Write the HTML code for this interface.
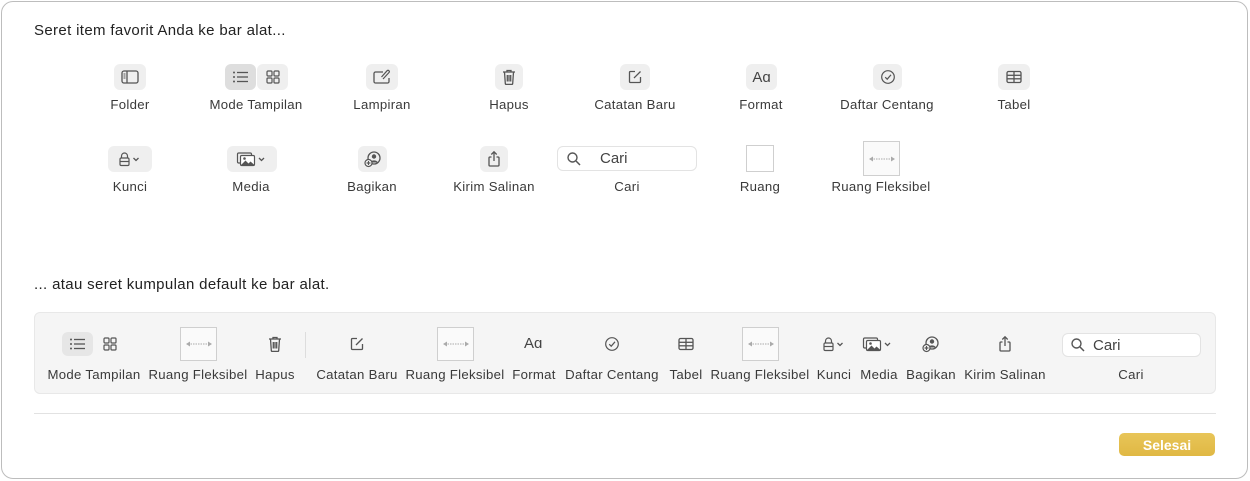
<!DOCTYPE html>
<html><head><meta charset="utf-8"><style>
*{margin:0;padding:0;box-sizing:border-box}
body{width:1250px;height:481px;background:#fff;font-family:"Liberation Sans",sans-serif;color:#333;position:relative;overflow:hidden}
.win{position:absolute;left:1px;top:1px;width:1247px;height:478px;border:1px solid #bdbdbd;border-radius:12px;background:#fff}
.t{position:absolute;font-size:15px;color:#222;letter-spacing:0.35px}
.l{position:absolute;font-size:13.2px;color:#3a3a3a;white-space:nowrap;transform:translateX(-50%);letter-spacing:0.3px}
.b{position:absolute;height:26px;background:#efefef;border-radius:6px;display:flex;align-items:center;justify-content:center}
.i{position:absolute;display:flex;align-items:center;justify-content:center}
svg{display:block}
.box{position:absolute;border:1px solid #cfcfcf;background:#fff}
.flex{position:absolute;border:1px solid #cfcfcf;background:#fafafa;display:flex;align-items:center;justify-content:center}
.srch{position:absolute;border:1px solid #e3e3e3;border-radius:6px;background:#fff;font-size:15px;color:#444;display:flex;align-items:center}
.bar{position:absolute;left:34px;top:312px;width:1182px;height:82px;background:#f5f5f5;border:1px solid #e8e8e8;border-radius:6px}
</style></head><body>
<svg width="0" height="0" style="position:absolute">
<defs>
<symbol id="folder" viewBox="0 0 20 16"><rect x="2" y="2" width="16" height="12" rx="2" fill="none" stroke="#555" stroke-width="1.3"/><line x1="7" y1="2" x2="7" y2="14" stroke="#555" stroke-width="1.3"/><line x1="3.5" y1="5" x2="5.5" y2="5" stroke="#555"/><line x1="3.5" y1="7" x2="5.5" y2="7" stroke="#555"/><line x1="3.5" y1="9" x2="5.5" y2="9" stroke="#555"/></symbol>
<symbol id="list" viewBox="0 0 20 16"><g fill="#555"><circle cx="3" cy="3.5" r="1"/><circle cx="3" cy="8" r="1"/><circle cx="3" cy="12.5" r="1"/></g><g stroke="#555" stroke-width="1.3"><line x1="6" y1="3.5" x2="17" y2="3.5"/><line x1="6" y1="8" x2="17" y2="8"/><line x1="6" y1="12.5" x2="17" y2="12.5"/></g></symbol>
<symbol id="grid" viewBox="0 0 16 16" ><g fill="none" stroke="#555" stroke-width="1.2"><rect x="2" y="2" width="5" height="5" rx="1"/><rect x="9" y="2" width="5" height="5" rx="1"/><rect x="2" y="9" width="5" height="5" rx="1"/><rect x="9" y="9" width="5" height="5" rx="1"/></g></symbol>
<symbol id="attach" viewBox="0 0 20 16"><path d="M11 3H3.5A1.5 1.5 0 0 0 2 4.5v8A1.5 1.5 0 0 0 3.5 14h12a1.5 1.5 0 0 0 1.5-1.5V9" fill="none" stroke="#555" stroke-width="1.3"/><path d="M11 10l6-6.5a1.3 1.3 0 0 0-2-1.7L9.5 8" fill="none" stroke="#555" stroke-width="1.2"/></symbol>
<symbol id="trash" viewBox="0 0 16 18"><g fill="none" stroke="#555" stroke-width="1.3"><line x1="2" y1="4" x2="14" y2="4"/><path d="M6 4V2.5h4V4"/><path d="M3.5 4l.8 11.5a1 1 0 0 0 1 .9h5.4a1 1 0 0 0 1-.9L12.5 4"/><line x1="6.3" y1="7" x2="6.3" y2="13.5"/><line x1="8" y1="7" x2="8" y2="13.5"/><line x1="9.7" y1="7" x2="9.7" y2="13.5"/></g></symbol>
<symbol id="note" viewBox="0 0 16 16"><g fill="none" stroke="#555" stroke-width="1.3"><path d="M8 2.5H3.5a1 1 0 0 0-1 1v9a1 1 0 0 0 1 1h9a1 1 0 0 0 1-1V8"/><path d="M7 9l6.5-6.5"/></g></symbol>
<symbol id="check" viewBox="0 0 16 16"><circle cx="8" cy="8" r="6.3" fill="none" stroke="#555" stroke-width="1.2"/><path d="M5.2 8.2l2 2 3.8-4.4" fill="none" stroke="#555" stroke-width="1.2"/></symbol>
<symbol id="table" viewBox="0 0 18 16"><g fill="none" stroke="#555" stroke-width="1.3"><rect x="2" y="2.5" width="14" height="11" rx="1.5"/><line x1="2" y1="6.3" x2="16" y2="6.3"/><line x1="2" y1="9.8" x2="16" y2="9.8"/><line x1="9" y1="2.5" x2="9" y2="13.5"/></g></symbol>
<symbol id="lock" viewBox="0 0 26 16"><g fill="none" stroke="#555" stroke-width="1.2"><path d="M4.5 7V5a3 3 0 0 1 6 0v2"/><rect x="3" y="7" width="9" height="7.5" rx="1.3"/><line x1="3" y1="10.5" x2="12" y2="10.5"/><path d="M16.5 7l2.5 2.5L21.5 7" stroke-width="1.3"/></g></symbol>
<symbol id="media" viewBox="0 0 32 16"><g fill="none" stroke="#555" stroke-width="1.2"><rect x="1.5" y="2" width="14" height="10" rx="1.3"/></g><rect x="4.5" y="4.5" width="14" height="10" rx="1.3" fill="#fff" stroke="#555" stroke-width="1.2"/><path d="M5 14l4.5-4.5 3 3 2-2 4 3.5z" fill="#555"/><circle cx="8.5" cy="7.5" r="1.3" fill="#555"/><path d="M23 7l2.5 2.5L28 7" fill="none" stroke="#555" stroke-width="1.3"/></symbol>
<symbol id="share" viewBox="0 0 18 18"><circle cx="10" cy="8" r="6" fill="none" stroke="#555" stroke-width="1.3"/><circle cx="10" cy="6.5" r="2.2" fill="#555"/><path d="M6 12.5a4.5 4 0 0 1 8 0" fill="#555"/><circle cx="4.5" cy="13" r="3.5" fill="#fff" stroke="#555" stroke-width="1.2"/><path d="M4.5 11v4M2.5 13h4" stroke="#555" stroke-width="1.2"/></symbol>
<symbol id="send" viewBox="0 0 16 18"><g fill="none" stroke="#555" stroke-width="1.3"><path d="M5.5 7H4a1 1 0 0 0-1 1v7a1 1 0 0 0 1 1h8a1 1 0 0 0 1-1V8a1 1 0 0 0-1-1h-1.5"/><line x1="8" y1="2" x2="8" y2="11"/><path d="M5.3 4.5L8 1.8l2.7 2.7"/></g></symbol>
<symbol id="mag" viewBox="0 0 16 16"><circle cx="6.5" cy="6.5" r="4.5" fill="none" stroke="#555" stroke-width="1.4"/><line x1="10" y1="10" x2="14" y2="14" stroke="#555" stroke-width="1.5"/></symbol>
<symbol id="arr" viewBox="0 0 30 8"><g stroke="#aaa" stroke-width="1"><line x1="4" y1="4" x2="26" y2="4" stroke-dasharray="1.5 1"/></g><path d="M2 4l4-2.5v5z M28 4l-4-2.5v5z" fill="#aaa"/></symbol>
</defs></svg>
<div class="win"></div>
<div class="t" style="left:34px;top:22px">Seret item favorit Anda ke bar alat...</div>

<div class="b" style="left:114px;top:64px;width:32px"><svg width="20" height="16"><use href="#folder"/></svg></div>
<div class="l" style="left:130px;top:97px">Folder</div>
<div class="b" style="left:225px;top:64px;width:31px;background:#dedede"><svg width="20" height="16"><use href="#list"/></svg></div>
<div class="b" style="left:257px;top:64px;width:31px"><svg width="16" height="16"><use href="#grid"/></svg></div>
<div class="l" style="left:256px;top:97px">Mode Tampilan</div>
<div class="b" style="left:366px;top:64px;width:32px"><svg width="20" height="16"><use href="#attach"/></svg></div>
<div class="l" style="left:382px;top:97px">Lampiran</div>
<div class="b" style="left:495px;top:64px;width:28px"><svg width="16" height="18"><use href="#trash"/></svg></div>
<div class="l" style="left:509px;top:97px">Hapus</div>
<div class="b" style="left:620px;top:64px;width:30px"><svg width="16" height="16"><use href="#note"/></svg></div>
<div class="l" style="left:635px;top:97px">Catatan Baru</div>
<div class="b" style="left:746px;top:64px;width:31px;font-size:15px;color:#444">Aɑ</div>
<div class="l" style="left:761px;top:97px">Format</div>
<div class="b" style="left:873px;top:64px;width:29px"><svg width="16" height="16"><use href="#check"/></svg></div>
<div class="l" style="left:887px;top:97px">Daftar Centang</div>
<div class="b" style="left:998px;top:64px;width:32px"><svg width="18" height="16"><use href="#table"/></svg></div>
<div class="l" style="left:1014px;top:97px">Tabel</div>

<div class="b" style="left:108px;top:146px;width:44px"><svg width="26" height="16"><use href="#lock"/></svg></div>
<div class="l" style="left:130px;top:179px">Kunci</div>
<div class="b" style="left:227px;top:146px;width:50px"><svg width="32" height="16"><use href="#media"/></svg></div>
<div class="l" style="left:251px;top:179px">Media</div>
<div class="b" style="left:358px;top:146px;width:29px"><svg width="18" height="18"><use href="#share"/></svg></div>
<div class="l" style="left:372px;top:179px">Bagikan</div>
<div class="b" style="left:480px;top:146px;width:28px"><svg width="16" height="18"><use href="#send"/></svg></div>
<div class="l" style="left:494px;top:179px">Kirim Salinan</div>
<div class="srch" style="left:557px;top:146px;width:140px;height:25px"><svg style="margin-left:8px" width="16" height="16"><use href="#mag"/></svg><span style="margin-left:18px">Cari</span></div>
<div class="l" style="left:627px;top:179px">Cari</div>
<div class="box" style="left:746px;top:145px;width:28px;height:27px"></div>
<div class="l" style="left:760px;top:179px">Ruang</div>
<div class="flex" style="left:863px;top:141px;width:37px;height:35px"><svg width="30" height="8"><use href="#arr"/></svg></div>
<div class="l" style="left:881px;top:179px">Ruang Fleksibel</div>

<div class="t" style="left:34px;top:276px">... atau seret kumpulan default ke bar alat.</div>

<div class="bar"></div>
<div class="b" style="left:62px;top:332px;width:31px;height:24px;background:#e6e6e6"><svg width="20" height="16"><use href="#list"/></svg></div>
<div class="i" style="left:102px;top:336px"><svg width="16" height="16"><use href="#grid"/></svg></div>
<div class="l" style="left:94px;top:367px">Mode Tampilan</div>
<div class="flex" style="left:180px;top:327px;width:37px;height:34px"><svg width="30" height="8"><use href="#arr"/></svg></div>
<div class="l" style="left:198px;top:367px">Ruang Fleksibel</div>
<div class="i" style="left:267px;top:335px"><svg width="16" height="18"><use href="#trash"/></svg></div>
<div class="l" style="left:275px;top:367px">Hapus</div>
<div style="position:absolute;left:305px;top:332px;width:1px;height:26px;background:#ddd"></div>
<div class="i" style="left:349px;top:336px"><svg width="16" height="16"><use href="#note"/></svg></div>
<div class="l" style="left:357px;top:367px">Catatan Baru</div>
<div class="flex" style="left:437px;top:327px;width:37px;height:34px"><svg width="30" height="8"><use href="#arr"/></svg></div>
<div class="l" style="left:455px;top:367px">Ruang Fleksibel</div>
<div class="i" style="left:524px;top:335px;font-size:15px;color:#444">Aɑ</div>
<div class="l" style="left:534px;top:367px">Format</div>
<div class="i" style="left:604px;top:336px"><svg width="16" height="16"><use href="#check"/></svg></div>
<div class="l" style="left:612px;top:367px">Daftar Centang</div>
<div class="i" style="left:677px;top:336px"><svg width="18" height="16"><use href="#table"/></svg></div>
<div class="l" style="left:686px;top:367px">Tabel</div>
<div class="flex" style="left:742px;top:327px;width:37px;height:34px"><svg width="30" height="8"><use href="#arr"/></svg></div>
<div class="l" style="left:760px;top:367px">Ruang Fleksibel</div>
<div class="i" style="left:821px;top:336px"><svg width="26" height="16"><use href="#lock"/></svg></div>
<div class="l" style="left:834px;top:367px">Kunci</div>
<div class="i" style="left:862px;top:336px"><svg width="32" height="16"><use href="#media"/></svg></div>
<div class="l" style="left:879px;top:367px">Media</div>
<div class="i" style="left:922px;top:335px"><svg width="18" height="18"><use href="#share"/></svg></div>
<div class="l" style="left:931px;top:367px">Bagikan</div>
<div class="i" style="left:997px;top:335px"><svg width="16" height="18"><use href="#send"/></svg></div>
<div class="l" style="left:1005px;top:367px">Kirim Salinan</div>
<div class="srch" style="left:1062px;top:333px;width:139px;height:24px"><svg style="margin-left:7px" width="16" height="16"><use href="#mag"/></svg><span style="margin-left:7px">Cari</span></div>
<div class="l" style="left:1131px;top:367px">Cari</div>

<div style="position:absolute;left:34px;top:413px;width:1182px;height:1px;background:#e2e2e2"></div>
<div style="position:absolute;left:1119px;top:433px;width:96px;height:23px;border-radius:5px;background:linear-gradient(#e8c558,#e0b844);color:#fff;font-size:14px;font-weight:bold;display:flex;align-items:center;justify-content:center">Selesai</div>
</body></html>
